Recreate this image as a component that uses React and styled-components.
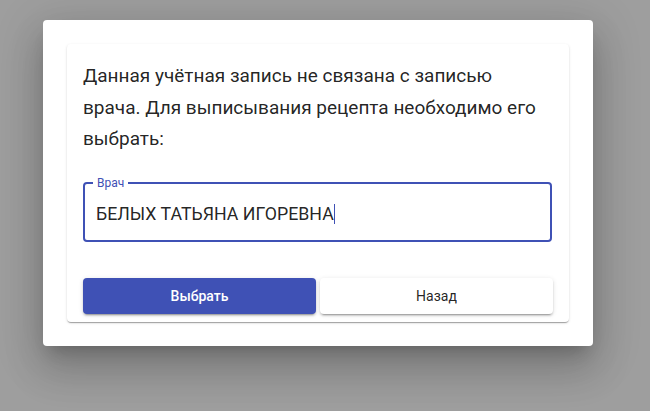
import React from "react";
import styled, { createGlobalStyle } from "styled-components";

const Global = createGlobalStyle`
  html, body { margin: 0; padding: 0; }
  body {
    background: #9e9e9e;
    font-family: Roboto, "Liberation Sans", Arial, sans-serif;
    width: 650px;
    height: 411px;
    overflow: hidden;
  }
`;

const Backdrop = styled.div`
  width: 650px;
  height: 411px;
  padding: 20px 0 0 43px;
  box-sizing: border-box;
`;

const Dialog = styled.div`
  width: 550px;
  box-sizing: border-box;
  padding: 24px;
  background: #fff;
  border-radius: 4px;
  box-shadow: 0 11px 15px -7px rgba(0,0,0,0.2), 0 24px 38px 3px rgba(0,0,0,0.14), 0 9px 46px 8px rgba(0,0,0,0.12);
`;

const Card = styled.div`
  background: #fff;
  border-radius: 4px;
  box-shadow: 0 2px 1px -1px rgba(0,0,0,0.2), 0 1px 1px 0 rgba(0,0,0,0.14), 0 1px 3px 0 rgba(0,0,0,0.12);
  padding: 16px 16px 8px 16px;
  display: flex;
  flex-direction: column;
`;

const Message = styled.p`
  margin: 0;
  font-size: 19px;
  line-height: 31.5px;
  color: rgba(0,0,0,0.87);
`;

const Field = styled.div`
  position: relative;
  margin: 27px 1px 0 0;
  padding: 0 11px;
  height: 60px;
  box-sizing: border-box;
  border: 2px solid #3f51b5;
  border-radius: 4px;
  display: flex;
  align-items: center;
`;

const Label = styled.span`
  position: absolute;
  top: -8px;
  left: 8px;
  padding: 0 4px;
  background: #fff;
  font-size: 12px;
  line-height: 14px;
  color: #3f51b5;
`;

const Value = styled.div`
  font-size: 17.75px;
  color: rgba(0,0,0,0.87);
  margin-top: 4px;
  display: flex;
  align-items: center;
`;

const Caret = styled.span`
  display: inline-block;
  width: 1px;
  height: 20px;
  background: #3f51b5;
`;

const Actions = styled.div`
  margin-top: 36px;
  display: grid;
  grid-template-columns: 1fr 1fr;
  gap: 4px;
`;

const Button = styled.button`
  height: 36px;
  border: none;
  border-radius: 4px;
  font-family: Roboto, "Liberation Sans", Arial, sans-serif;
  font-size: 14px;
  cursor: pointer;
  background: ${p => (p.$primary ? "#3f51b5" : "#fff")};
  color: ${p => (p.$primary ? "#fff" : "rgba(0,0,0,0.87)")};
  font-weight: ${p => (p.$primary ? 500 : 400)};
  box-shadow: 0 3px 1px -2px rgba(0,0,0,0.2), 0 2px 2px 0 rgba(0,0,0,0.14), 0 1px 5px 0 rgba(0,0,0,0.12);
`;

export default function App() {
  return (
    <>
      <Global />
      <Backdrop>
        <Dialog>
          <Card>
            <Message>
              Данная учётная запись не связана с записью врача. Для выписывания рецепта необходимо его выбрать:
            </Message>
            <Field>
              <Label>Врач</Label>
              <Value>
                БЕЛЫХ ТАТЬЯНА ИГОРЕВНА<Caret />
              </Value>
            </Field>
            <Actions>
              <Button $primary>Выбрать</Button>
              <Button>Назад</Button>
            </Actions>
          </Card>
        </Dialog>
      </Backdrop>
    </>
  );
}
